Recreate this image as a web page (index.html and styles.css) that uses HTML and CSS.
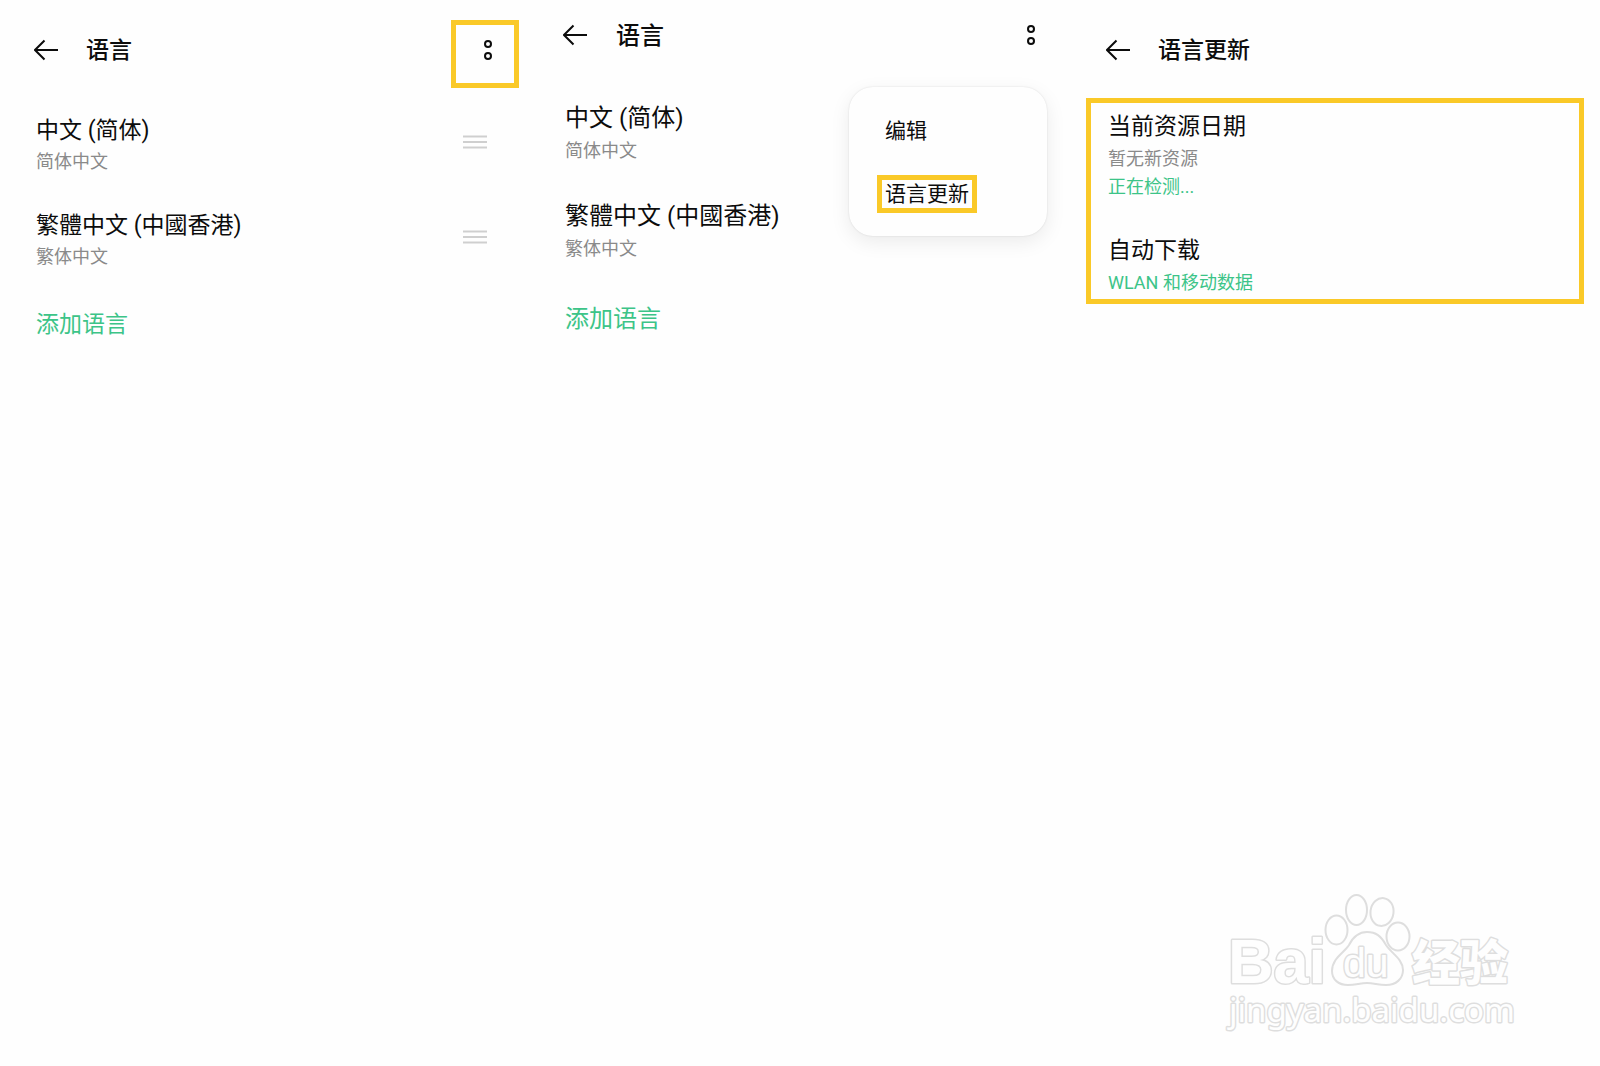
FILE: index.html
```html
<!DOCTYPE html>
<html lang="zh-CN">
<head>
<meta charset="utf-8">
<meta name="viewport" content="width=device-width, initial-scale=1">
<title>语言</title>
<link rel="stylesheet" href="styles.css">
</head>
<body>
<main class="steps">
  <section class="screen">
    <header class="bar">
      <button class="icon-button" type="button" aria-label="返回">
        <svg class="arrow" viewBox="0 0 24 24"><path d="M24 12H1.500M10.500 2.500L1 12l9.500 9.500"/></svg>
      </button>
      <h1 class="title">语言</h1>
      <button class="icon-button more" type="button" aria-label="更多">
        <svg class="dots" viewBox="0 0 10 24"><circle cx="5" cy="6" r="3"/><circle cx="5" cy="18" r="3"/></svg>
        <span class="mark mark-more"></span>
      </button>
    </header>
    <ul class="list">
      <li class="item">
        <div class="labels"><span class="name">中文 (简体)</span><span class="note">简体中文</span></div>
        <svg class="handle" viewBox="0 0 24 14"><path d="M0 1.500h24M0 7h24M0 12.500h24"/></svg>
      </li>
      <li class="item">
        <div class="labels"><span class="name" lang="zh-HK">繁體中文 (中國香港)</span><span class="note">繁体中文</span></div>
        <svg class="handle" viewBox="0 0 24 14"><path d="M0 1.500h24M0 7h24M0 12.500h24"/></svg>
      </li>
    </ul>
    <button class="add" type="button">添加语言</button>
  </section>

  <section class="screen screen-menu">
    <header class="bar">
      <button class="icon-button" type="button" aria-label="返回">
        <svg class="arrow" viewBox="0 0 24 24"><path d="M24 12H1.500M10.500 2.500L1 12l9.500 9.500"/></svg>
      </button>
      <h1 class="title">语言</h1>
      <button class="icon-button more" type="button" aria-label="更多">
        <svg class="dots" viewBox="0 0 10 24"><circle cx="5" cy="6" r="3"/><circle cx="5" cy="18" r="3"/></svg>
      </button>
    </header>
    <ul class="list">
      <li class="item">
        <div class="labels"><span class="name">中文 (简体)</span><span class="note">简体中文</span></div>
      </li>
      <li class="item">
        <div class="labels"><span class="name" lang="zh-HK">繁體中文 (中國香港)</span><span class="note">繁体中文</span></div>
      </li>
    </ul>
    <button class="add" type="button">添加语言</button>
    <div class="menu">
      <button class="menu-item" type="button">编辑</button>
      <button class="menu-item marked" type="button">语言更新</button>
    </div>
  </section>

  <section class="screen">
    <header class="bar">
      <button class="icon-button" type="button" aria-label="返回">
        <svg class="arrow" viewBox="0 0 24 24"><path d="M24 12H1.500M10.500 2.500L1 12l9.500 9.500"/></svg>
      </button>
      <h1 class="title">语言更新</h1>
    </header>
    <div class="update">
      <div class="labels"><span class="name">当前资源日期</span><span class="note">暂无新资源</span><span class="note active">正在检测...</span></div>
      <div class="labels"><span class="name">自动下载</span><span class="note active">WLAN 和移动数据</span></div>
    </div>
  </section>
</main>

<footer class="footer">
  <svg class="logo" viewBox="0 0 320 160" role="img" aria-label="Baidu 经验">
    <text class="brand" x="18" y="103">Bai</text>
    <ellipse cx="126.500" cy="50" rx="11" ry="14.500"/>
    <ellipse cx="146.500" cy="30" rx="10.500" ry="15"/>
    <ellipse cx="172" cy="32" rx="11.500" ry="14" transform="rotate(8 172 32)"/>
    <ellipse cx="188" cy="56.500" rx="11.500" ry="14"/>
    <path d="M157 52c-9 0-14 5-18 13-4 7-17 13-17 26 0 9 7 14 16 14 8 0 12-2 19-2s11 2 19 2c10 0 17-6 17-15 0-11-12-17-17-25-5-9-10-13-19-13z"/>
    <text class="du" x="133" y="97">du</text>
    <text class="brand-cn" x="202" y="100">经验</text>
    <text class="site" x="19" y="142">jingyan.baidu.com</text>
  </svg>
</footer>
</body>
</html>
```
FILE: styles.css
```css
* {
  box-sizing: border-box;
}

body {
  margin: 0;
  min-height: 100vh;
  display: flex;
  flex-direction: column;
  background: #fefefe;
  color: #0c0c0c;
  font-family: Roboto, "Noto Sans CJK SC", sans-serif;
}

button {
  margin: 0;
  padding: 0;
  border: 0;
  background: none;
  color: inherit;
  font: inherit;
  text-align: left;
  cursor: pointer;
}

svg {
  display: block;
}

[lang="zh-HK"] {
  font-family: Roboto, "Noto Sans CJK TC", sans-serif;
}

.steps {
  display: grid;
  grid-template-columns: 33fr 34fr 33fr;
}

.screen {
  position: relative;
  padding-top: 33px;
  font-size: 23px;
  line-height: 32px;
}

.bar {
  display: flex;
  align-items: center;
  gap: 28px;
  padding: 0 35px 0 34px;
}

.icon-button {
  position: relative;
  flex: none;
}

.more {
  margin-left: auto;
}

.arrow {
  width: 24px;
  height: 24px;
  fill: none;
  stroke: #0c0c0c;
  stroke-width: 2;
}

.dots {
  width: 10px;
  height: 24px;
  fill: none;
  stroke: #0c0c0c;
  stroke-width: 2;
}

.title {
  margin: 0;
  padding-top: 2px;
  font-size: inherit;
  font-weight: 500;
}

.mark {
  position: absolute;
  border: 5px solid #fac928;
}

.mark-more {
  top: -18px;
  right: -26px;
  width: 68px;
  height: 68px;
}

.list {
  display: grid;
  gap: 34px;
  margin: 48px 0 0;
  padding: 0 41px 0 36px;
  list-style: none;
}

.item {
  display: flex;
  align-items: flex-start;
  justify-content: space-between;
}

.labels {
  display: grid;
}

.name {
  padding-bottom: 1px;
}

.note {
  color: #8a8a8a;
  font-size: 18px;
  line-height: 28px;
}

.active {
  color: #3cc488;
}

.handle {
  width: 24px;
  height: 14px;
  margin-top: 20px;
  stroke: #cfcfcf;
  stroke-width: 2;
}

.add {
  margin: 38px 36px 0;
  color: #3cc488;
}

.screen-menu {
  padding-top: 18px;
  font-size: 24px;
}

.screen-menu .bar {
  gap: 29px;
  padding: 0 36px 0 35px;
}

.screen-menu .list {
  gap: 35px;
  margin-top: 50px;
  padding-left: 37px;
}

.screen-menu .name {
  padding-bottom: 3px;
}

.screen-menu .add {
  margin: 40px 37px 0;
}

.menu {
  position: absolute;
  top: 87px;
  right: 25px;
  width: 198px;
  display: grid;
  justify-items: start;
  gap: 25px;
  padding: 25px 28px 23px;
  border-radius: 24px;
  background: #fefefe;
  box-shadow: 0 0 2px rgba(0, 0, 0, 0.12), 0 6px 20px rgba(0, 0, 0, 0.08);
  font-size: 21px;
  line-height: 28px;
}

.menu-item {
  padding: 0 3px;
  border: 5px solid transparent;
}

.marked {
  border-color: #fac928;
}

.update {
  display: grid;
  gap: 34px;
  margin: 31px 16px 0 14px;
  padding: 8px 17px 2px;
  border: 5px solid #fac928;
}

.update .name {
  padding-bottom: 2px;
}

.footer {
  display: flex;
  justify-content: flex-end;
  margin-top: auto;
  padding: 0 70px 26px;
}

.logo {
  width: 320px;
  height: 160px;
  fill: #fefefe;
  stroke: #dedede;
  stroke-width: 2;
  stroke-linejoin: round;
}

.logo text {
  paint-order: stroke;
  stroke-width: 3;
}

.brand {
  font: bold 63px "Liberation Sans", sans-serif;
}

.du {
  font: 41px "Liberation Sans", sans-serif;
}

.brand-cn {
  font: 900 48px "Noto Sans CJK SC", sans-serif;
}

.site {
  font: 33px "Noto Sans", sans-serif;
}
```
